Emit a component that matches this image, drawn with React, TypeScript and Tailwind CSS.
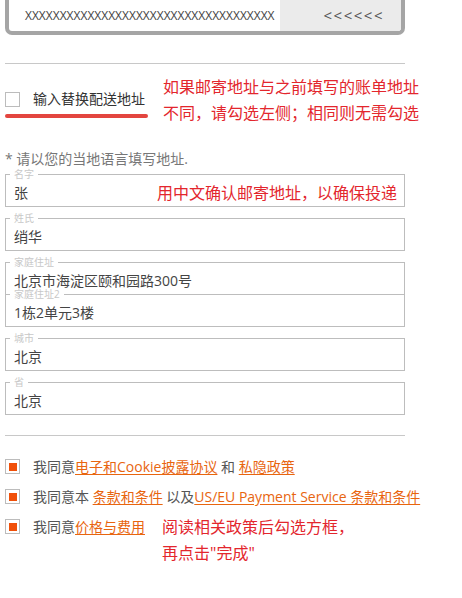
import React from 'react';

const font = { fontFamily: '"Open Sans", "Noto Sans CJK SC", sans-serif' };

function Field({ label, value, note, noBottom, overlap }: { label: string; value: string; note?: string; noBottom?: boolean; overlap?: boolean }) {
  return (
    <fieldset
      className={
        'border border-[#bdbdbd] ' +
        (noBottom ? 'border-b-0 ' : '') +
        (overlap ? '-mt-[6px] ' : 'mt-[5px] ')
      }
    >
      <legend className="ml-[4px] px-[4px] text-[10px] leading-[12px] text-[#c8c8c8]">{label}</legend>
      <div className="flex items-center justify-between pl-[8px] pr-[7px] pt-[3px] pb-[3px]">
        <span className="text-[14px] leading-[20px] text-[#444]">{value}</span>
        {note && <span className="text-[16px] leading-[20px] text-[#e3262d]">{note}</span>}
      </div>
    </fieldset>
  );
}

function Check({ checked }: { checked?: boolean }) {
  return (
    <span className="flex h-[15px] w-[15px] shrink-0 items-center justify-center border border-[#bcbcbc] bg-white">
      {checked && <span className="h-[8px] w-[8px] bg-[#f0500a]" />}
    </span>
  );
}

export default function App() {
  const link = 'text-[#e8650f] underline underline-offset-2';
  return (
    <div className="min-h-[598px] w-[462px] overflow-hidden bg-white" style={font}>
      <div className="w-[400px] ml-[5px]">
        <div className="flex h-[35px] overflow-hidden rounded-b-[7px] border-x-4 border-b-4 border-[#a5a5a5]">
          <div className="flex min-w-0 flex-1 items-center overflow-hidden whitespace-nowrap pl-[16px] text-[12px] text-[#444]">
            XXXXXXXXXXXXXXXXXXXXXXXXXXXXXXXXXXXX
          </div>
          <div className="flex w-[121px] shrink-0 items-center justify-end bg-[#ebebeb] pr-[17px] text-[15px] tracking-[1.5px] text-[#555]">
            &lt;&lt;&lt;&lt;&lt;&lt;
          </div>
        </div>

        <div className="mt-[28px] h-px bg-[#c8c8c8]" />

        <div className="mt-[10px] flex items-start">
          <div className="w-[158px] shrink-0 pt-[17px]">
            <div className="flex items-center">
              <Check />
              <span className="ml-[13px] text-[14px] leading-[16px] text-[#333]">输入替换配送地址</span>
            </div>
            <div className="mt-[7px] h-[4px] w-[143px] rounded-sm bg-[#e3453f]" />
          </div>
          <div className="whitespace-nowrap text-[16px] leading-[26px] text-[#e3262d]">
            <div>如果邮寄地址与之前填写的账单地址</div>
            <div>不同，请勾选左侧；相同则无需勾选</div>
          </div>
        </div>

        <div className="mt-[25px] text-[14px] leading-[16px] text-[#777]">* 请以您的当地语言填写地址.</div>

        <div className="-mt-[4px]">
          <Field label="名字" value="张" note="用中文确认邮寄地址，以确保投递" />
          <Field label="姓氏" value="绡华" />
          <Field label="家庭住址" value="北京市海淀区颐和园路300号" noBottom />
          <Field label="家庭住址2" value="1栋2单元3楼" overlap />
          <Field label="城市" value="北京" />
          <Field label="省" value="北京" />
        </div>

        <div className="mt-[20px] h-px bg-[#c8c8c8]" />

        <div className="mt-[23px] flex flex-col gap-[15px] text-[14px] leading-[15px] text-[#555]">
          <div className="flex items-center">
            <Check checked />
            <span className="ml-[13px] whitespace-nowrap">
              我同意<span className={link}>电子和Cookie披露协议</span> 和 <span className={link}>私隐政策</span>
            </span>
          </div>
          <div className="flex items-center">
            <Check checked />
            <span className="ml-[13px] whitespace-nowrap">
              我同意本 <span className={link}>条款和条件</span> 以及<span className={link}>US/EU Payment Service 条款和条件</span>
            </span>
          </div>
          <div className="flex items-start">
            <div className="flex w-[157px] shrink-0 items-center">
              <Check checked />
              <span className="ml-[13px] whitespace-nowrap">
                我同意<span className={link}>价格与费用</span>
              </span>
            </div>
            <div className="-mt-[5px] whitespace-nowrap text-[16px] leading-[26px] text-[#e3262d]">
              <div>阅读相关政策后勾选方框，</div>
              <div>再点击"完成"</div>
            </div>
          </div>
        </div>
      </div>
    </div>
  );
}
